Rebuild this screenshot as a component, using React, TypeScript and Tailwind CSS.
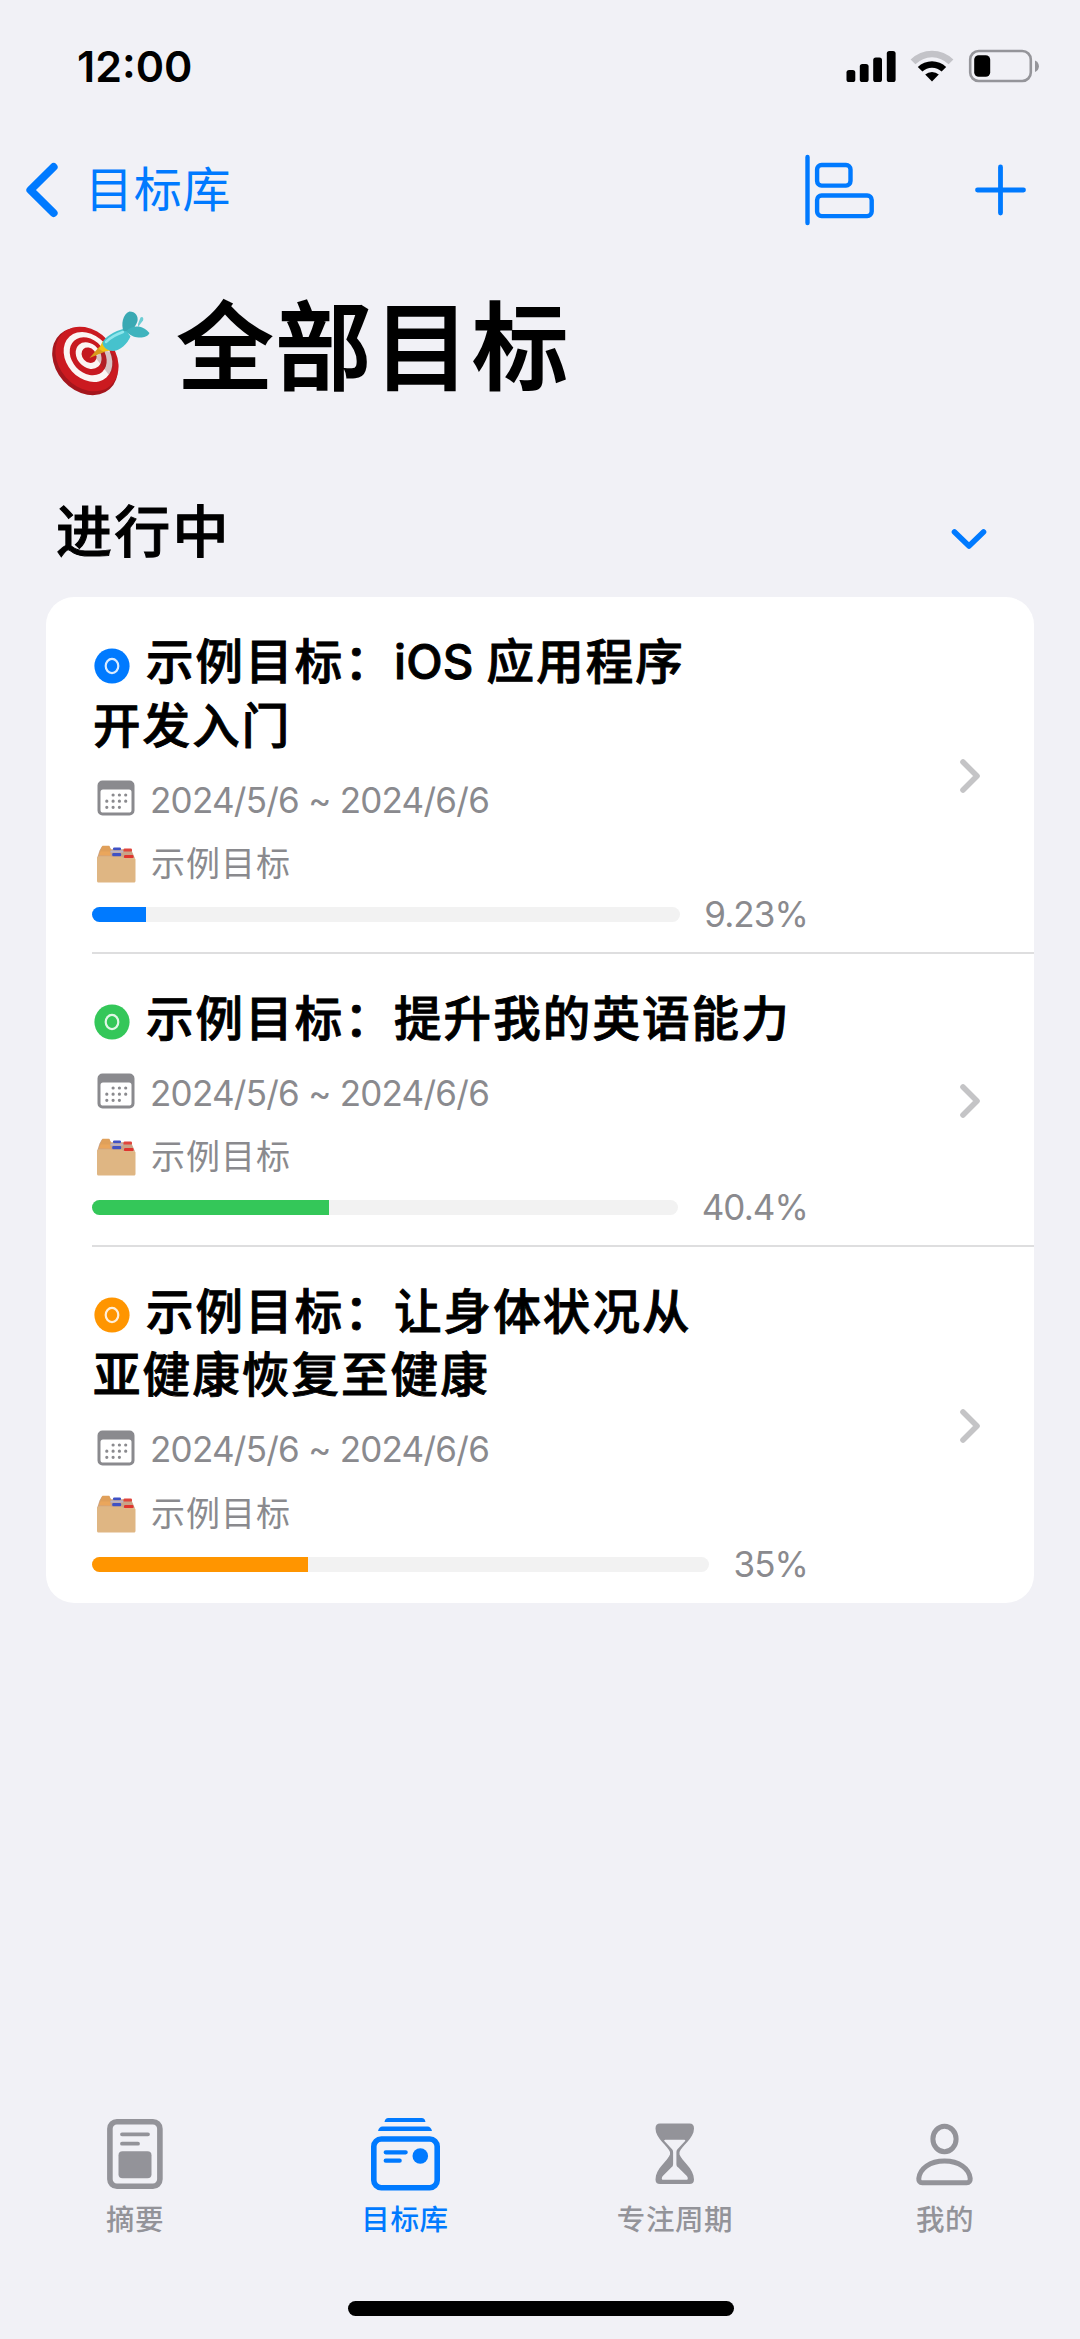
import type { ReactNode } from "react";

type Goal = {
  id: number;
  lines: string[];
  period: string;
  folder: string;
  progress: number;
  badge: string;
  bar: string;
};

const goals: Goal[] = [
  {
    id: 1,
    lines: ["示例目标：iOS 应用程序", "开发入门"],
    period: "2024/5/6 ~ 2024/6/6",
    folder: "示例目标",
    progress: 9.23,
    badge: "text-[#007aff]",
    bar: "bg-[#007aff]",
  },
  {
    id: 2,
    lines: ["示例目标：提升我的英语能力"],
    period: "2024/5/6 ~ 2024/6/6",
    folder: "示例目标",
    progress: 40.4,
    badge: "text-[#34c759]",
    bar: "bg-[#34c759]",
  },
  {
    id: 3,
    lines: ["示例目标：让身体状况从", "亚健康恢复至健康"],
    period: "2024/5/6 ~ 2024/6/6",
    folder: "示例目标",
    progress: 35,
    badge: "text-[#ff9500]",
    bar: "bg-[#ff9500]",
  },
];

// Latin words sit tighter than the Chinese text around them
const renderLine = (line: string) =>
  line.split(/([A-Za-z]+ )/).map((part, i) =>
    i % 2 === 1 ? (
      <span key={i} className="tracking-[0.2px]">
        {part}
      </span>
    ) : (
      part
    )
  );

const StatusBar = () => (
  <div className="flex h-[132px] items-center justify-between pl-[77px] pr-[40px]">
    <span className="text-[43px] font-semibold leading-none">12:00</span>
    <div className="flex items-center gap-[14px]">
      <svg className="h-[32px] w-[50px]" viewBox="0 0 50 32">
        <rect x="0.5" y="20" width="8.8" height="12" rx="2.6" />
        <rect x="13.8" y="14" width="8.8" height="18" rx="2.6" />
        <rect x="27.2" y="7.5" width="8.8" height="24.5" rx="2.6" />
        <rect x="40.8" y="1" width="8.8" height="31" rx="2.6" />
      </svg>
      <svg className="h-[32px] w-[44px]" viewBox="0 0 44 32">
        <path
          d="M0.6 9.6A30.2 30.2 0 0 1 43.4 9.6L38.6 14.2A23.6 23.6 0 0 0 5.4 14.2Z"
          fill="#c3c3c8"
        />
        <path d="M7.8 17A20.2 20.2 0 0 1 36.2 17L31.6 21.6A13.6 13.6 0 0 0 12.4 21.6Z" />
        <path d="M15.2 24.6A10 10 0 0 1 28.8 24.6L22 31.6Z" />
      </svg>
      <svg className="h-[34px] w-[72px]" viewBox="0 0 72 34">
        <rect
          x="2.2"
          y="2"
          width="60.6"
          height="30"
          rx="8.5"
          fill="none"
          stroke="#95959a"
          strokeWidth="2.6"
        />
        <path d="M67 11.5c5.2 2 5.2 9.6 0 11.6z" fill="#95959a" />
        <rect x="6.2" y="6.2" width="16" height="21.5" rx="4.5" />
      </svg>
    </div>
  </div>
);

const NavBar = () => (
  <div className="flex h-[116px] items-center justify-between pl-[25px] pr-[53px] text-[#007aff]">
    <button className="flex items-center gap-[26px]">
      <svg className="h-[56px] w-[34px]" viewBox="0 0 34 56">
        <path
          d="M28.6 5L5.4 28l23.2 23"
          fill="none"
          stroke="currentColor"
          strokeWidth="8"
          strokeLinecap="round"
          strokeLinejoin="round"
        />
      </svg>
      <span className="text-[48px] leading-none tracking-[0.8px]">目标库</span>
    </button>
    <div className="flex items-center gap-[101px]">
      <svg className="h-[72px] w-[70px]" viewBox="0 0 70 72">
        <g
          fill="none"
          stroke="currentColor"
          strokeWidth="4.4"
          strokeLinecap="round"
        >
          <path d="M3.5 3v66" />
          <rect x="13.1" y="11" width="33.4" height="20.6" rx="4.5" />
          <rect x="13.1" y="41.5" width="54.6" height="20.6" rx="4.5" />
        </g>
      </svg>
      <svg className="h-[52px] w-[52px]" viewBox="0 0 52 52">
        <path
          d="M25.5 3v46M2.5 26h46"
          stroke="currentColor"
          strokeWidth="4.8"
          strokeLinecap="round"
        />
      </svg>
    </div>
  </div>
);

const DartIcon = () => (
  <svg className="mt-[16px] h-[86px] w-[100px]" viewBox="0 0 100 86">
    <ellipse
      cx="34"
      cy="50.5"
      rx="29"
      ry="37"
      transform="rotate(-42 34 50.5)"
      fill="#a5161d"
    />
    <ellipse
      cx="36"
      cy="48"
      rx="28"
      ry="35.500"
      transform="rotate(-42 36 48)"
      fill="#cb1a20"
    />
    <g transform="rotate(-42 37 46)">
      <ellipse cx="37" cy="46" rx="21.5" ry="27.5" fill="#fbf5f3" />
      <ellipse cx="37.6" cy="45.6" rx="16.2" ry="21" fill="#c81a20" />
      <ellipse cx="38.4" cy="45.4" rx="11.5" ry="14.5" fill="#fbf5f3" />
      <ellipse cx="39" cy="45.4" rx="6.8" ry="8.4" fill="#c4181f" />
    </g>
    <path d="M44 46l14 18c6-5 7-14 5-21l-9-4z" fill="#6b3034" opacity="0.25" />
    <path d="M38.500 47l10-11.500 6 5z" fill="#d99a1c" />
    <path d="M48 38l3.500-7.500c3 1 8 6 8.500 9l-8 1z" fill="#f2c414" />
    <path
      d="M51.500 32c1-5 12-12 22-14.500l6 8c-3 7-10 14-17 14.500-5 .5-11-4-11-8z"
      fill="#46c2cd"
    />
    <path d="M87 13l2.500-6.500c2-1.500 3.500.5 2.500 3L87 16z" fill="#6ccdd4" />
    <path
      d="M72.500 20c-2.500-6-1-17 6-19.500 6 0 9 5 8 9.500-1 4-4 7-6 10.500z"
      fill="#3aa9b3"
    />
    <path
      d="M75 20.500c3-4 8-5 12-5 5 .5 9 3.500 11.500 6.500-2 4-7 5-11 4.500-5-.5-8-2-12.500-6z"
      fill="#3fb3bd"
    />
    <path
      d="M55 31c5-5 11-8 17-10"
      stroke="#8fe6ec"
      strokeWidth="2.5"
      strokeLinecap="round"
      fill="none"
    />
  </svg>
);

const CalendarIcon = () => (
  <svg className="h-[36px] w-[38px] shrink-0" viewBox="0 0 38 36" fill="#8a8a8e">
    <path
      fillRule="evenodd"
      d="M5.5 0.5h27a5 5 0 0 1 5 5v25a5 5 0 0 1-5 5h-27a5 5 0 0 1-5-5v-25a5 5 0 0 1 5-5zM6 9.4a2.5 2.5 0 0 0-2.5 2.5v18a2.7 2.7 0 0 0 2.7 2.7h25.6a2.7 2.7 0 0 0 2.7-2.7v-18a2.5 2.5 0 0 0-2.5-2.5z"
    />
    <path
      d="M16.1 15h.01M22.4 15h.01M28.7 15h.01M9.8 21.2h.01M16.1 21.2h.01M22.4 21.2h.01M28.7 21.2h.01M9.8 27.3h.01M16.1 27.3h.01M22.4 27.3h.01"
      stroke="#8a8a8e"
      strokeWidth="3.2"
      strokeLinecap="round"
    />
  </svg>
);

const FolderIcon = () => (
  <svg className="h-[38px] w-[40px] shrink-0" viewBox="0 0 40 38">
    <path d="M3.5 5.5L6 1.3h7.5l1.5 3H35l4 9.2H1z" fill="#c9a387" />
    <path d="M4.5 5L6.5 0.8h6.7l1.6 3.7-1 5.5H3z" fill="#e0a05a" />
    <path d="M2.6 10.5l2-4h9l1.6 4.3z" fill="#eaa65c" />
    <rect x="17" y="2.4" width="8" height="2.8" rx="1.2" fill="#3f51c4" />
    <rect x="27.5" y="3.6" width="8.5" height="3" rx="1.2" fill="#e0453c" />
    <path d="M14.5 5.6h12.5v2h-12.5z" fill="#b9b3c6" />
    <rect x="16.2" y="8" width="9" height="3.2" rx="1.2" fill="#3f51c4" />
    <rect x="28" y="10" width="9.5" height="3.2" rx="1.2" fill="#e0342d" />
    <path
      d="M1 13.5c0-1.5.8-2.3 2.3-2.3h11l2.2.6H26l2 1.4h10c1 0 1.5.5 1.5 1.5V36c0 .9-.6 1.500-1.500 1.500H2.500C1.600 37.500 1 36.900 1 36z"
      fill="#dfb683"
    />
  </svg>
);

const GoalRow = ({ goal, last }: { goal: Goal; last: boolean }) => (
  <div className="flex pl-[46px]">
    <div
      className={`flex flex-1 items-center justify-between pr-[53px] ${
        last ? "pb-[2px]" : "border-b-2 border-[#dededf]"
      }`}
    >
      <div className="w-[716px] pb-[18.500px] pt-[33px]">
        <h3 className="pl-[1px] text-[47.5px] font-medium leading-[63.5px] tracking-[2.1px] [-webkit-text-stroke:0.9px_black]">
          {goal.lines.map((line, i) => (
            <span key={line} className="flex items-center whitespace-pre">
              {i === 0 && (
                <svg
                  className={`ml-[1px] mr-[16px] mt-[8px] h-[36px] w-[36px] ${goal.badge}`}
                  viewBox="0 0 36 36"
                >
                  <circle cx="18" cy="18" r="17.6" fill="currentColor" />
                  <ellipse
                    cx="18"
                    cy="18"
                    rx="6.3"
                    ry="7.1"
                    fill="none"
                    stroke="#fff"
                    strokeOpacity="0.85"
                    strokeWidth="2.2"
                  />
                </svg>
              )}
              <span>{renderLine(line)}</span>
            </span>
          ))}
        </h3>
        <div className="mt-[9px] flex h-[64px] items-center gap-[15px] pl-[5px] text-[35px] leading-none text-[#8a8a8e]">
          <CalendarIcon />
          <span className="mt-[4px] tracking-[-0.75px]">{goal.period}</span>
        </div>
        <div className="flex h-[66px] items-center gap-[15px] pl-[4px] pt-[2px] text-[34px] leading-none tracking-[1px] text-[#8a8a8e]">
          <FolderIcon />
          <span>{goal.folder}</span>
        </div>
        <div className="flex h-[37px] items-center gap-[24px]">
          <div className="h-[15px] flex-1 overflow-hidden rounded-full bg-[#f2f2f2]">
            <div
              className={`h-full ${goal.bar}`}
              style={{ width: `${goal.progress}%` }}
            />
          </div>
          <span className="text-[35px] leading-none tracking-[-0.9px] text-[#8a8a8e]">
            {goal.progress}%
          </span>
        </div>
      </div>
      <svg className="mt-[4px] h-[36px] w-[22px]" viewBox="0 0 22 36">
        <path
          d="M4 4L18 18 4 32"
          fill="none"
          stroke="#c4c4c6"
          strokeWidth="5.6"
          strokeLinecap="round"
          strokeLinejoin="round"
        />
      </svg>
    </div>
  </div>
);

const SummaryIcon = () => (
  <svg className="h-[74px] w-[58px]" viewBox="0 0 58 74">
    <rect
      x="3.9"
      y="4.7"
      width="50"
      height="64.6"
      rx="7"
      fill="none"
      stroke="currentColor"
      strokeWidth="5.6"
    />
    <path
      d="M16 17.3h26M16 26.7h16"
      stroke="currentColor"
      strokeWidth="3.8"
      strokeLinecap="round"
    />
    <rect x="12.5" y="34.3" width="33" height="27" rx="4" fill="currentColor" />
  </svg>
);

const LibraryIcon = () => (
  <svg className="h-[74px] w-[70px]" viewBox="0 0 70 74">
    <g fill="currentColor">
      <path d="M14.5 5c.5-2.6 1.6-4 3.8-4h33.4c2.2 0 3.3 1.4 3.8 4z" />
      <path d="M8 14c.8-3 2.2-4.5 4.5-4.5h45c2.3 0 3.7 1.500 4.500 4.500z" />
      <circle cx="50.3" cy="39" r="7.8" />
    </g>
    <rect
      x="3.8"
      y="22"
      width="63.4"
      height="48.7"
      rx="7.5"
      fill="none"
      stroke="currentColor"
      strokeWidth="5.6"
    />
    <path
      d="M15.7 35.3h20M15.7 43.7h14"
      stroke="currentColor"
      strokeWidth="4.2"
      strokeLinecap="round"
    />
  </svg>
);

const HourglassIcon = () => (
  <svg className="h-[74px] w-[40px]" viewBox="0 0 40 74">
    <path
      fill="currentColor"
      fillRule="evenodd"
      d="M5 6.5h29.5c3 0 4.5 1.8 4.5 5 0 10-12.5 17.5-14.5 23.5v2.5c2 6 14.5 14 14.5 25 0 3-1.5 4.5-4.500 4.500H5C2 67 .5 65.500.5 62.500c0-11 12.500-19 14.500-25V35C13 29 .5 21.500.5 11.500c0-3.200 1.500-5 4.500-5zM10.200 22.700c-1 0-1.300.8-.6 1.600l7 7.500c1 1.100 1.500 2 1.500 3.600v11.500c0 1.500-.5 2.400-1.600 3.400L8 58.800c-.8.800-1.200 1.700-1.200 2.700 0 .9.500 1.300 1.300 1.300h23.400c.8 0 1.300-.4 1.300-1.300 0-1-.4-1.900-1.200-2.700L23 50.300c-1.100-1-1.600-1.900-1.600-3.400V35.400c0-1.600.5-2.500 1.500-3.600l7-7.500c.7-.8.400-1.600-.6-1.600z"
    />
  </svg>
);

const PersonIcon = () => (
  <svg className="h-[74px] w-[58px]" viewBox="0 0 58 74">
    <g fill="none" stroke="currentColor" strokeWidth="5">
      <ellipse cx="28.5" cy="22" rx="11.6" ry="12.7" />
      <path
        d="M2.8 61.5C3.8 51.5 14 44 28.5 44s24.7 7.5 25.7 17.5c.2 2.5-1 4.3-3.500 4.300H6.300c-2.500 0-3.700-1.800-3.500-4.300z"
        strokeLinejoin="round"
      />
    </g>
  </svg>
);

const Tab = ({
  label,
  active,
  children,
}: {
  label: string;
  active?: boolean;
  children: ReactNode;
}) => (
  <button
    className={`flex flex-1 flex-col items-center ${
      active ? "text-[#007aff]" : "text-[#939399]"
    }`}
  >
    {children}
    <span className="mt-[13px] text-[28.5px] font-medium leading-[32px] tracking-[0.6px]">
      {label}
    </span>
  </button>
);

export default function App() {
  return (
    <div
      lang="zh-CN"
      className="flex h-[2339px] w-[1080px] flex-col overflow-hidden bg-[#f1f1f6] font-['Inter','Noto_Sans_CJK_SC',sans-serif] text-black"
    >
      <StatusBar />
      <NavBar />

      <h1 className="mt-[42px] flex h-[112px] items-center gap-[26px] pl-[51px] text-[96px] font-medium leading-none tracking-[2.4px]">
        <DartIcon />
        <span className="mt-[2px] [-webkit-text-stroke:1.8px_black]">
          全部目标
        </span>
      </h1>

      {/* In progress */}
      <div className="mt-[92px] flex h-[74px] items-center justify-between pl-[56px] pr-[92px]">
        <h2 className="mt-[2px] text-[56px] font-medium leading-none tracking-[2.3px] [-webkit-text-stroke:1px_black]">
          进行中
        </h2>
        <svg className="mt-[16px] h-[24px] w-[38px]" viewBox="0 0 38 24">
          <path
            d="M4.5 5L19 19 33.500 5"
            fill="none"
            stroke="#007aff"
            strokeWidth="5.6"
            strokeLinecap="round"
            strokeLinejoin="round"
          />
        </svg>
      </div>
      <div className="mx-[46px] mt-[29px] overflow-hidden rounded-[28px] bg-white">
        {goals.map((goal, i) => (
          <GoalRow key={goal.id} goal={goal} last={i === goals.length - 1} />
        ))}
      </div>

      {/* Tab bar */}
      <nav className="mt-auto flex h-[184px]">
        <Tab label="摘要">
          <SummaryIcon />
        </Tab>
        <Tab label="目标库" active>
          <LibraryIcon />
        </Tab>
        <Tab label="专注周期">
          <HourglassIcon />
        </Tab>
        <Tab label="我的">
          <PersonIcon />
        </Tab>
      </nav>
      <div className="ml-[348px] mb-[23px] h-[15px] w-[386px] shrink-0 rounded-full bg-black" />
    </div>
  );
}
